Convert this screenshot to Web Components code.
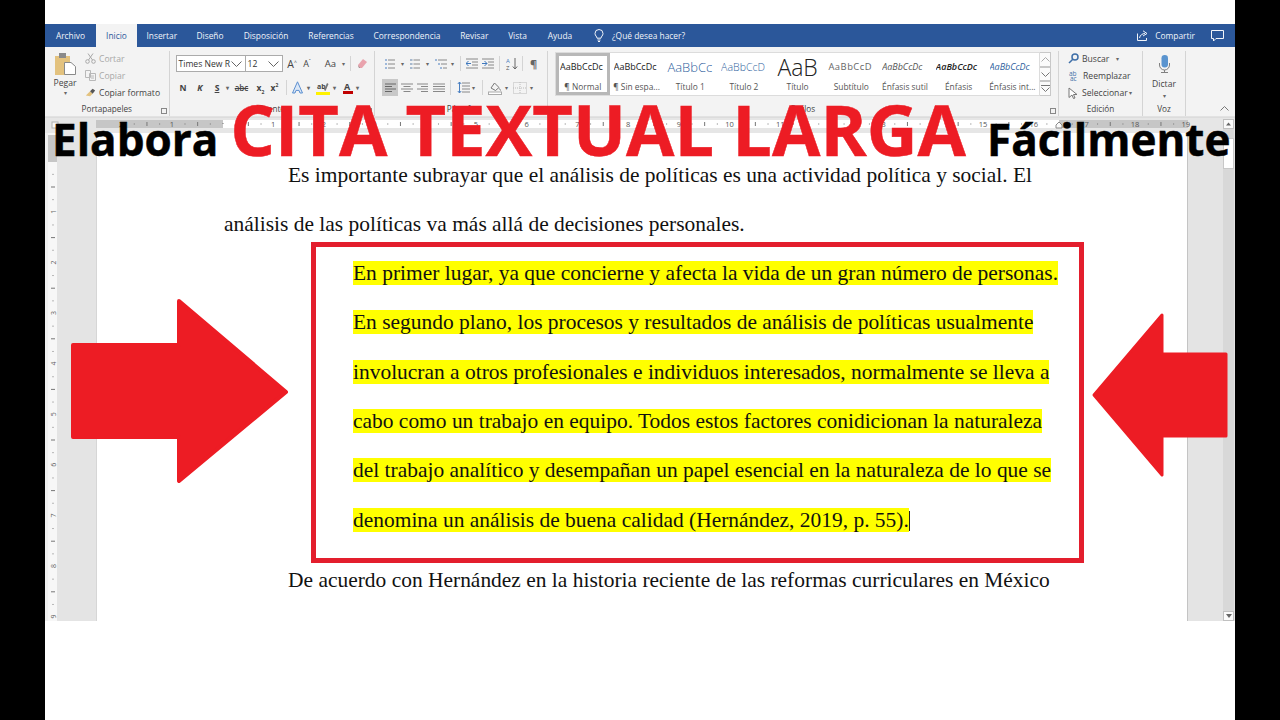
<!DOCTYPE html>
<html lang="es">
<head>
<meta charset="utf-8">
<style>
  html, body { margin: 0; padding: 0; background: #000; }
  body { width: 1280px; height: 720px; overflow: hidden; font-family: "Open Sans", "Liberation Sans", sans-serif; }
</style>
</head>
<body>
<word-window>
  <word-tabs slot="tabs"></word-tabs>
  <word-ribbon slot="ribbon"></word-ribbon>
  <word-ruler slot="ruler"></word-ruler>
  <word-doc slot="doc"></word-doc>
</word-window>
<thumb-overlay></thumb-overlay>

<script>
class WordWindow extends HTMLElement {
  constructor() {
    super();
    this.attachShadow({mode: 'open'}).innerHTML = `
    <style>
      :host { display: flex; flex-direction: column; width: 1190px; height: 720px; margin-left: 45px; background: #fff; padding-top: 24px; box-sizing: border-box; }
      .bottom { flex: 1; background: #fff; }
    </style>
    <slot name="tabs"></slot>
    <slot name="ribbon"></slot>
    <slot name="ruler"></slot>
    <slot name="doc"></slot>
    <div class="bottom"></div>`;
  }
}
customElements.define('word-window', WordWindow);

class WordTabs extends HTMLElement {
  constructor() {
    super();
    const tabs = [['Archivo',51],['Inicio',41],['Insertar',49.5],['Diseño',47],['Disposición',65],['Referencias',65],['Correspondencia',87],['Revisar',47.5],['Vista',39],['Ayuda',46]];
    this.attachShadow({mode: 'open'}).innerHTML = `
    <style>
      :host { display: flex; align-items: stretch; height: 23px; background: #2b579a; color: #f1f4f9; font: 8.4px "Open Sans", sans-serif; box-sizing: border-box; }
      .tab { display: flex; align-items: center; justify-content: center; white-space: nowrap; flex: none; }
      .tab.on { background: #f3f3f3; color: #2b579a; }
      .ask { display: flex; align-items: center; gap: 8px; margin-left: 11px; }
      .grow { flex: 1; }
      .share { display: flex; align-items: center; gap: 7px; margin-right: 16px; }
      .cmt { display: flex; align-items: center; margin-right: 11px; }
      svg { display: block; }
    </style>
    ${tabs.map(t => `<div class="tab${t[0] === 'Inicio' ? ' on' : ''}" style="width:${t[1]}px">${t[0]}</div>`).join('')}
    <div class="ask">
      <svg width="10" height="13" viewBox="0 0 10 13" fill="none" stroke="#f1f4f9" stroke-width="1"><path d="M3 9.2C3 7.4 1 6.8 1 4.5a4 4 0 0 1 8 0C9 6.8 7 7.4 7 9.2z"/><path d="M3.5 11h3M4 12.5h2"/></svg>
      <span>¿Qué desea hacer?</span>
    </div>
    <div class="grow"></div>
    <div class="share">
      <svg width="11" height="11" viewBox="0 0 11 11" fill="none" stroke="#f1f4f9" stroke-width="1"><path d="M.5 3.500v7h9V8"/><path d="M2.500 8c.5-3 3-4.500 5.500-4.500M6 .8l4 2.700L6 6"/></svg>
      <span>Compartir</span>
    </div>
    <div class="cmt">
      <svg width="13" height="12" viewBox="0 0 13 12" fill="none" stroke="#f1f4f9" stroke-width="1"><path d="M.5.5h12v8H5L2.5 11V8.500h-2z"/></svg>
    </div>`;
  }
}
customElements.define('word-tabs', WordTabs);

// small layout helpers for the ribbon rows
const cell = (w, html) => `<span class="c" style="width:${w}px">${html}</span>`;
const gap = w => `<span class="c" style="width:${w}px"></span>`;
const bar = '<span class="sep"></span>';
const arrow = '<span class="caret">▾</span>';

const lines = (ys, x1, x2) => ys.map(y => `M${x1} ${y}H${x2}`).join('');
const ico = {
  bullets: `<svg width="10" height="12" viewBox="0 0 10 12" fill="none"><path d="${lines([2, 6, 10], 3, 10)}" stroke="#888"/><path d="${lines([2, 6, 10], 0, 2)}" stroke="#4a7fc1"/></svg>`,
  numbers: `<svg width="10" height="12" viewBox="0 0 10 12" fill="none"><path d="${lines([2, 6, 10], 3.500, 10)}" stroke="#888"/><path d="${lines([2, 6, 10], 0, 2.500)}" stroke="#5b7fa8"/></svg>`,
  multi: `<svg width="12" height="12" viewBox="0 0 12 12" fill="none"><path d="M3 2h9M6 6h6M8 10h4" stroke="#888"/><path d="M0 2h2M3 6h2M5 10h2" stroke="#4a7fc1"/></svg>`,
  outdent: `<svg width="12" height="11" viewBox="0 0 12 11" fill="none"><path d="${lines([1, 10], 0, 12)}${lines([4, 7], 6, 12)}" stroke="#888"/><path d="M5 5.500H0M2.500 3L0 5.500 2.500 8" stroke="#3f78bd"/></svg>`,
  indent: `<svg width="12" height="11" viewBox="0 0 12 11" fill="none"><path d="${lines([1, 10], 0, 12)}${lines([4, 7], 6, 12)}" stroke="#888"/><path d="M0 5.500h5M2.500 3L5 5.500 2.500 8" stroke="#3f78bd"/></svg>`,
  sort: `<svg width="12" height="14" viewBox="0 0 12 14" fill="none"><text x="0" y="6" font-size="6" font-family="Open Sans" fill="#4a7fc1">A</text><text x="0" y="12.500" font-size="6" font-family="Open Sans" fill="#555">Z</text><path d="M9 1v11M6.800 9.500L9 12l2.200-2.500" stroke="#666"/></svg>`,
  left: `<svg width="11" height="9" viewBox="0 0 11 9" stroke="#666"><path d="M0 1h11M0 3.500h7M0 6h11M0 8.500h7"/></svg>`,
  center: `<svg width="12" height="9" viewBox="0 0 12 9" stroke="#888"><path d="M0 1h12M2.500 3.500h7M0 6h12M2.500 8.500h7"/></svg>`,
  right: `<svg width="11" height="9" viewBox="0 0 11 9" stroke="#888"><path d="M0 1h11M4 3.500h7M0 6h11M4 8.500h7"/></svg>`,
  justify: `<svg width="12" height="9" viewBox="0 0 12 9" stroke="#888"><path d="M0 1h12M0 3.500h12M0 6h12M0 8.500h12"/></svg>`,
  spacing: `<svg width="13" height="13" viewBox="0 0 13 13" fill="none"><path d="${lines([2, 5, 8, 11], 5, 13)}" stroke="#888"/><path d="M2.500 1v11M.8 3l1.700-2L4.200 3M.8 10l1.700 2 1.700-2" stroke="#4a7fc1"/></svg>`,
  shade: `<svg width="14" height="14" viewBox="0 0 14 14" fill="none" stroke="#777"><path d="M3 7l3.500-5 4.500 4.500-3.500 3z"/><path d="M11.500 7.500l1 2"/><rect x=".5" y="11" width="13" height="2.500" fill="#fff" stroke="#aaa"/></svg>`,
  borders: `<svg width="14" height="12" viewBox="0 0 14 12" fill="none" stroke="#bbb" stroke-dasharray="1 1"><path d="M.5.500h13v11H.500zM7 0v12M0 6h14"/></svg>`,
  eraser: `<svg width="12" height="12" viewBox="0 0 12 12"><path d="M2 7l5-6 4 3-5 6H3z" fill="#e9a3ad"/><path d="M2 7l2 3H3z" fill="#888"/></svg>`,
  chev: `<svg width="11" height="6" viewBox="0 0 11 6" fill="none" stroke="#666"><path d="M.5.500l5 5 5-5"/></svg>`,
  effect: `<svg width="13" height="13" viewBox="0 0 13 13" fill="#dbe7f6" stroke="#5b8fd0"><path d="M6.500.8L1.500 12h2.500l1-2.600h3l1 2.600h2.500z"/></svg>`,
  highlight: `<svg width="14" height="14" viewBox="0 0 14 14"><text x="1" y="8" font-size="7" font-family="Open Sans" fill="#444">ab</text><path d="M8 9l3-7 1.500 1-3 7z" fill="#777"/><rect y="11" width="14" height="3" fill="#fff200"/></svg>`,
  color: `<svg width="10" height="13" viewBox="0 0 10 13"><text x="1" y="9" font-size="9" font-family="Open Sans" fill="#444">A</text><rect y="10" width="10" height="3" fill="#c00000"/></svg>`
};

class WordRibbon extends HTMLElement {
  constructor() {
    super();
    const gallery = [
      ['AaBbCcDc','¶ Normal','font:9px \"Open Sans\",sans-serif;color:#222'],
      ['AaBbCcDc','¶ Sin espa...','font:9px \"Open Sans\",sans-serif;color:#222'],
      ['AaBbCc','Título 1','font:300 13px \"Open Sans\",sans-serif;color:#2f5f9e'],
      ['AaBbCcD','Título 2','font:300 10.600px \"Open Sans\",sans-serif;color:#2f5f9e'],
      ['AaB','Título','font:300 23px/24px \"Open Sans\",sans-serif;color:#222'],
      ['AaBbCcD','Subtítulo','font:9.400px \"Open Sans\",sans-serif;color:#666;letter-spacing:.5px'],
      ['AaBbCcDc','Énfasis sutil','font:italic 9px \"Open Sans\",sans-serif;color:#555'],
      ['AaBbCcDc','Énfasis','font:italic 600 9px \"Open Sans\",sans-serif;color:#222'],
      ['AaBbCcDc','Énfasis int...','font:italic 9px \"Open Sans\",sans-serif;color:#2f5f9e']
    ];
    this.attachShadow({mode: 'open'}).innerHTML = `
    <style>
      :host { display: flex; height: 70px; background: #f3f3f3; color: #444; font: 8.6px "Open Sans", sans-serif; box-sizing: border-box; border-bottom: 1px solid #e2e2e2; }
      svg { display: block; flex: none; }
      .group { display: flex; flex-direction: column; border-right: 1px solid #d4d4d4; margin: 4px 0 0; box-sizing: border-box; flex: none; }
      .body { flex: 1; display: flex; min-height: 0; }
      .label { height: 14px; line-height: 14px; text-align: center; font-size: 8.2px; position: relative; }
      .launch { position: absolute; right: 2px; top: 6px; width: 4px; height: 4px; border: 1px solid #888; }
      .clip { width: 124.500px; }
      .paste { width: 40px; display: flex; flex-direction: column; align-items: center; padding-top: 2px; }
      .paste span { margin-top: 2px; line-height: 12px; }
      .caret { font-size: 6px; line-height: 8px; color: #666; display: block; }
      .cliprows { display: flex; flex-direction: column; margin-top: -1px; }
      .cliprow { display: flex; align-items: center; gap: 3px; height: 17px; white-space: nowrap; }
      .dim { color: #a8a8a8; }
      .font { width: 205.500px; }
      .combo { height: 17px; background: #fff; border: 1px solid #ababab; display: flex; align-items: center; justify-content: space-between; box-sizing: border-box; padding: 0 3px 0 2px; color: #333; flex: none; }
      .row { display: flex; align-items: center; height: 17px; }
      .c { display: flex; align-items: center; justify-content: center; flex: none; white-space: nowrap; }
      .sep { width: 1px; height: 15px; background: #d4d4d4; flex: none; display: block; }
      .fontrows, .pararows { display: flex; flex-direction: column; gap: 7px; padding: 4px 0 0 6px; }
      .pararows { padding-left: 7px; }
      .fmt { font-weight: 700; color: #444; }
      .para { width: 173px; }
      .sel { background: #c8c8c8; height: 17px; }
      .styles { width: 511px; }
      .gal { margin: 1px 0 0 7px; width: 485px; height: 44px; background: #fff; border: 1px solid #dcdcdc; box-sizing: border-box; display: flex; flex: none; }
      .sty { box-sizing: border-box; width: 53.700px; padding: 0 4px; display: flex; flex-direction: column; align-items: center; overflow: hidden; white-space: nowrap; flex: none; }
      .sty.first { box-shadow: inset 0 0 0 3px #b8b8b8; }
      .sty .s { height: 27px; display: flex; align-items: center; justify-content: flex-start; width: 100%; overflow: hidden; flex: none; }
      .sty .s.tall { overflow: visible; justify-content: center; }
      .sty .n { font-size: 8.400px; color: #555; line-height: 14px; }
      .gbtns { margin: 1px 0 0 0; width: 11px; height: 44px; display: flex; flex-direction: column; flex: none; }
      .gbtns div { flex: 1; border: 1px solid #c8c8c8; border-left: 0; background: #fbfbfb; display: flex; align-items: center; justify-content: center; }
      .edit { width: 84px; }
      .editrows { display: flex; flex-direction: column; padding: 0 0 0 9px; margin-top: -1px; }
      .er { display: flex; align-items: center; gap: 3px; height: 17px; white-space: nowrap; }
      .voice { width: 43px; }
      .mic { display: flex; flex-direction: column; align-items: center; width: 100%; padding-top: 4px; }
      .mic span { margin-top: 5px; line-height: 12px; }
      .rest { flex: 1; position: relative; }
      .collapse { position: absolute; right: 6px; bottom: 5px; }
      sup, sub { font-size: 5px; line-height: 0; }
    </style>

    <div class="group clip">
      <div class="body">
        <div class="paste">
          <svg width="21" height="22" viewBox="0 0 21 22"><rect x="0" y="3" width="15" height="19" fill="#e3c27e"/><rect x="4" y="0" width="7" height="5" fill="#8a8a8a"/><path d="M9.500 9.500h6.500l4.500 4v8h-11z" fill="#fff" stroke="#8a8a8a"/></svg>
          <span>Pegar</span>
          <div class="caret">▾</div>
        </div>
        <div class="cliprows">
          <div class="cliprow dim"><svg width="11" height="11" viewBox="0 0 11 11" fill="none" stroke="#a8a8a8"><circle cx="2.500" cy="8.500" r="1.800"/><circle cx="8.500" cy="8.500" r="1.800"/><path d="M3.500 7 8 .5M7.500 7 3 .5"/></svg><span>Cortar</span></div>
          <div class="cliprow dim"><svg width="11" height="11" viewBox="0 0 11 11" fill="none" stroke="#b8b8b8"><path d="M.5.5h5v7h-5zM4.500 3.500h6v7h-6zM6 6h3M6 8h3"/></svg><span>Copiar</span></div>
          <div class="cliprow"><svg width="11" height="11" viewBox="0 0 13 11"><path d="M1 9l5-5 3 3-3 3z" fill="#e3c27e"/><path d="M6 4l3-3 3 2-3 4z" fill="#555"/></svg><span>Copiar formato</span></div>
        </div>
      </div>
      <div class="label">Portapapeles<i class="launch"></i></div>
    </div>

    <div class="group font">
      <div class="body">
        <div class="fontrows">
          <div class="row">
            <div class="combo" style="width:69px;border-right:0">Times New R${ico.chev}</div>
            <div class="combo" style="width:38px">12${ico.chev}</div>
            ${gap(4)}${cell(11, '<span style="font-size:10.500px">A<sup>^</sup></span>')}${gap(4)}${cell(11, '<span style="font-size:9px">A<sup>ˇ</sup></span>')}${gap(9)}
            ${cell(18, '<span style="font-size:9.500px">Aa</span>')}${cell(8, arrow)}${gap(2)}${bar}${gap(5)}${cell(12, ico.eraser)}
          </div>
          <div class="row fmt">
            ${cell(15, 'N')}${cell(19, '<i>K</i>')}${cell(15, '<u>S</u>')}${cell(6, arrow)}${cell(22, '<s style="font-size:8px;font-weight:600">abc</s>')}
            ${cell(16, '<span>x<sub>2</sub></span>')}${cell(12, '<span>x<sup>2</sup></span>')}${gap(5)}${bar}${gap(4)}
            ${cell(14, ico.effect)}${cell(8, arrow)}${gap(3)}${cell(14, ico.highlight)}${cell(10, arrow)}${gap(3)}${cell(10, ico.color)}${cell(10, arrow)}
          </div>
        </div>
      </div>
      <div class="label">Fuente<i class="launch"></i></div>
    </div>

    <div class="group para">
      <div class="body">
        <div class="pararows">
          <div class="row">
            ${gap(3)}${cell(10, ico.bullets)}${cell(14, arrow)}${gap(1)}${cell(10, ico.numbers)}${cell(14, arrow)}${gap(1)}${cell(12, ico.multi)}${cell(10, arrow)}${gap(3)}${bar}${gap(5)}
            ${cell(12, ico.outdent)}${gap(4)}${cell(12, ico.indent)}${gap(5)}${bar}${gap(6)}${cell(12, ico.sort)}${gap(4)}${bar}${gap(7)}${cell(7, '<span style="font-size:11px;color:#666;font-weight:700">¶</span>')}
          </div>
          <div class="row">
            <span class="c sel" style="width:16px">${ico.left}</span>${gap(3)}${cell(12, ico.center)}${gap(4)}${cell(11, ico.right)}${gap(5)}${cell(12, ico.justify)}${gap(5)}${bar}${gap(6)}
            ${cell(13, ico.spacing)}${cell(7, arrow)}${gap(5)}${bar}${gap(5)}${cell(14, ico.shade)}${cell(8, arrow)}${gap(3)}${cell(14, ico.borders)}${cell(8, arrow)}
          </div>
        </div>
      </div>
      <div class="label">Párrafo<i class="launch"></i></div>
    </div>

    <div class="group styles">
      <div class="body">
        <div class="gal">
          ${gallery.map((g, i) => `<div class="sty${i === 0 ? ' first' : ''}"><div class="s${g[0] === 'AaB' ? ' tall' : ''}"><span style='${g[2]}'>${g[0]}</span></div><div class="n">${g[1]}</div></div>`).join('')}
        </div>
        <div class="gbtns">
          <div><svg width="9" height="5" viewBox="0 0 9 5" fill="none" stroke="#aaa"><path d="M.5 4.500l4-4 4 4"/></svg></div>
          <div><svg width="9" height="5" viewBox="0 0 9 5" fill="none" stroke="#777"><path d="M.5.500l4 4 4-4"/></svg></div>
          <div><svg width="9" height="7" viewBox="0 0 9 7" fill="none" stroke="#777"><path d="M0 .5h9M.5 2.500l4 4 4-4"/></svg></div>
        </div>
      </div>
      <div class="label">Estilos<i class="launch"></i></div>
    </div>

    <div class="group edit">
      <div class="body">
        <div class="editrows">
          <div class="er"><svg width="11" height="11" viewBox="0 0 11 11" fill="none" stroke="#3f6fa8" stroke-width="1.500"><circle cx="7" cy="4" r="3"/><path d="M4.800 6.200L1 10"/></svg><span>Buscar</span><span class="caret" style="margin-left:4px">▾</span></div>
          <div class="er" style="gap:2px"><svg width="13" height="15" viewBox="0 0 13 15"><text x="1" y="7.500" font-size="6.500" font-family="Open Sans" fill="#3f6fa8">ab</text><text x="2" y="13" font-size="6.500" font-family="Open Sans" fill="#3f6fa8">ac</text></svg><span>Reemplazar</span></div>
          <div class="er"><svg width="11" height="12" viewBox="0 0 11 12" fill="#fff" stroke="#777"><path d="M1 1l8 6.500H5.500L7 11l-1.500.5L4 8 1 10.500z"/></svg><span>Seleccionar</span><span class="caret" style="margin-left:-2px">▾</span></div>
        </div>
      </div>
      <div class="label">Edición</div>
    </div>

    <div class="group voice">
      <div class="body">
        <div class="mic">
          <svg width="13" height="18" viewBox="0 0 13 18" fill="none"><rect x="3.500" y="0" width="6.500" height="12.500" rx="3.200" fill="#5a94cf"/><path d="M1.500 8v2a5 5 0 0 0 10 0V8M6.500 15v2.500M3 17.500h7" stroke="#808080"/></svg>
          <span>Dictar</span>
          <div class="caret" style="margin-top:2px">▾</div>
        </div>
      </div>
      <div class="label">Voz</div>
    </div>

    <div class="rest"><svg class="collapse" width="9" height="5" viewBox="0 0 9 5" fill="none" stroke="#777"><path d="M.5 4.500l4-4 4 4"/></svg></div>`;
  }
}
customElements.define('word-ribbon', WordRibbon);

class WordRuler extends HTMLElement {
  constructor() {
    super();
    const unit = 50.7, zero = 177.5;
    let ticks = '';
    for (let i = -2; i <= 19; i++) {
      const x = zero + i * unit;
      if (i !== 0) ticks += `<text x="${x}" y="10" font-size="7.500" text-anchor="middle" font-family="Open Sans" fill="#555">${Math.abs(i)}</text>`;
      else ticks += `<rect x="${x}" y="6" width="1" height="1" fill="#777"/>`;
      if (i === 19) continue;
      for (const d of [0.25, 0.75]) ticks += `<rect x="${x + d * unit}" y="6.500" width="1" height="1" fill="#777"/>`;
      ticks += `<rect x="${x + unit / 2}" y="5" width="1" height="4" fill="#777"/>`;
    }
    this.attachShadow({mode: 'open'}).innerHTML = `
    <style>
      :host { display: block; height: 16px; background: #e6e6e6; box-sizing: border-box; }
      svg { display: block; }
    </style>
    <svg width="1190" height="16" viewBox="0 0 1190 16">
      <rect x="0" y="0" width="1190" height="1" fill="#dcdcdc"/>
      <rect x="7" y="5" width="6" height="6" fill="#f7f7f7" stroke="#b0b0b0"/>
      <rect x="51" y="3" width="1092" height="8" fill="#fff"/>
      <rect x="51" y="3" width="127" height="8" fill="#c6c6c6"/>
      <rect x="1014" y="3" width="129" height="8" fill="#c6c6c6"/>
      ${ticks}
      <path d="M1011 8l3-3 3 3v3h-6z" fill="#fafafa" stroke="#8a8a8a"/>
      <rect x="1178" y="2" width="11" height="14" fill="#d8d8d8"/>
      <rect x="1178.500" y="2.500" width="10" height="9" fill="#fafafa" stroke="#c0c0c0"/>
      <path d="M1181 8.500l2.500-3 2.500 3z" fill="#666"/>
    </svg>`;
  }
}
customElements.define('word-ruler', WordRuler);

class WordDoc extends HTMLElement {
  constructor() {
    super();
    const quote = [
      'En primer lugar, ya que concierne y afecta la vida de un gran número de personas.',
      'En segundo plano, los procesos y resultados de análisis de políticas usualmente',
      'involucran a otros profesionales e individuos interesados, normalmente se lleva a',
      'cabo como un trabajo en equipo. Todos estos factores conidicionan la naturaleza',
      'del trabajo analítico y desempañan un papel esencial en la naturaleza de lo que se',
      'denomina un análisis de buena calidad (Hernández, 2019, p. 55).'
    ];
    let marks = '';
    for (let n = 0; n <= 9; n++) {
      const y = 180 + (n - 3) * 50.6;
      if (y < 0) continue;
      if (n > 0) marks += `<text transform="translate(10.500 ${y}) rotate(-90)" font-size="7" text-anchor="middle" font-family="Open Sans" fill="#666">${n}</text>`;
      for (const d of [0.25, 0.75]) marks += `<rect x="7.500" y="${y + d * 50.6}" width="1" height="1" fill="#777"/>`;
      marks += `<rect x="6" y="${y + 25.3}" width="4" height="1" fill="#777"/>`;
    }
    this.attachShadow({mode: 'open'}).innerHTML = `
    <style>
      :host { display: flex; height: 488px; background: #e4e4e4; }
      .vruler { width: 51px; flex: none; }
      .vruler svg { display: block; }
      .page { width: 1092px; flex: none; background: #fff; border-left: 1px solid #d6d6d6; border-right: 1px solid #c4c4c4; box-sizing: border-box; padding: 17.500px 0 0 127px; font: 21.460px/49.300px "Liberation Serif", serif; color: #111; white-space: nowrap; overflow: hidden; }
      p { margin: 0; }
      .indent { padding-left: 64px; }
      .quote { padding-left: 129px; }
      mark { background: #ffff00; color: #111; }
      .last { margin-top: 10.700px; }
      .caret { display: inline-block; width: 1px; height: 20px; background: #222; vertical-align: -4px; }
      .pad { width: 35px; flex: none; }
      .sb { width: 11px; flex: none; background: #d8d8d8; display: flex; flex-direction: column; }
      .track { flex: 1; }
      .btn { height: 10px; background: #fafafa; border: 1px solid #c0c0c0; box-sizing: border-box; display: flex; align-items: center; justify-content: center; }
      .thumb { height: 31px; margin-top: 5px; background: #fff; border: 1px solid #c8c8c8; box-sizing: border-box; }
      .edge { width: 1px; flex: none; background: #e4e4e4; }
    </style>
    <div class="vruler">
      <svg width="51" height="488" viewBox="0 0 51 488">
        <rect x="0" y="0" width="3" height="488" fill="#f0f0f0"/>
        <rect x="3" y="0" width="9" height="488" fill="#f7f7f7"/>
        <rect x="3" y="2" width="9" height="27" fill="#c6c6c6"/>
        ${marks}
      </svg>
    </div>
    <div class="page">
      <p class="indent">Es importante subrayar que el análisis de políticas es una actividad política y social. El</p>
      <p>análisis de las políticas va más allá de decisiones personales.</p>
      ${quote.map((q, i) => `<p class="quote"><mark>${q}</mark>${i === 5 ? '<span class="caret"></span>' : ''}</p>`).join('')}
      <p class="indent last">De acuerdo con Hernández en la historia reciente de las reformas curriculares en México</p>
    </div>
    <div class="pad"></div>
    <div class="sb">
      <div class="thumb"></div>
      <div class="track"></div>
      <div class="btn"><svg width="6" height="4" viewBox="0 0 6 4"><path d="M0 0l3 4 3-4z" fill="#666"/></svg></div>
    </div>
    <div class="edge"></div>`;
  }
}
customElements.define('word-doc', WordDoc);

/* thumbnail stuff drawn over the document: headline, red frame, arrows */
class ThumbOverlay extends HTMLElement {
  constructor() {
    super();
    this.attachShadow({mode: 'open'}).innerHTML = `
    <style>
      :host { display: block; position: absolute; left: 0; top: 0; width: 1280px; height: 720px; pointer-events: none; }
      .title { position: absolute; left: 52px; top: 81px; display: flex; align-items: baseline; font-family: "Open Sans", sans-serif; font-weight: 700; white-space: nowrap; color: #000; line-height: 96px; -webkit-text-stroke: .5px currentColor; }
      .small { font-size: 44px; }
      .big { font-size: 70.200px; color: #ed1c24; margin-left: 12px; }
      .big + .small { margin-left: 21px; }
      .frame { position: absolute; left: 311px; top: 242px; width: 773px; height: 321px; box-sizing: border-box; border: 5px solid #e31e2d; }
      svg { position: absolute; }
    </style>
    <div class="title"><span class="small">Elabora</span><span class="big">CITA TEXTUAL LARGA</span><span class="small">Fácilmente</span></div>
    <div class="frame"></div>
    <svg style="left:70px;top:298px" width="220" height="187" viewBox="0 0 220 187"><path d="M3 47H109V3L216 94 109 183V139H3z" fill="#ed1c24" stroke="#ed1c24" stroke-width="4" stroke-linejoin="round"/></svg>
    <svg style="left:1091px;top:313px" width="138" height="165" viewBox="0 0 138 165"><path d="M135 41H71V2L3 82 71 162V123H135z" fill="#ed1c24" stroke="#ed1c24" stroke-width="3" stroke-linejoin="round"/></svg>`;
  }
}
customElements.define('thumb-overlay', ThumbOverlay);
</script>
</body>
</html>
